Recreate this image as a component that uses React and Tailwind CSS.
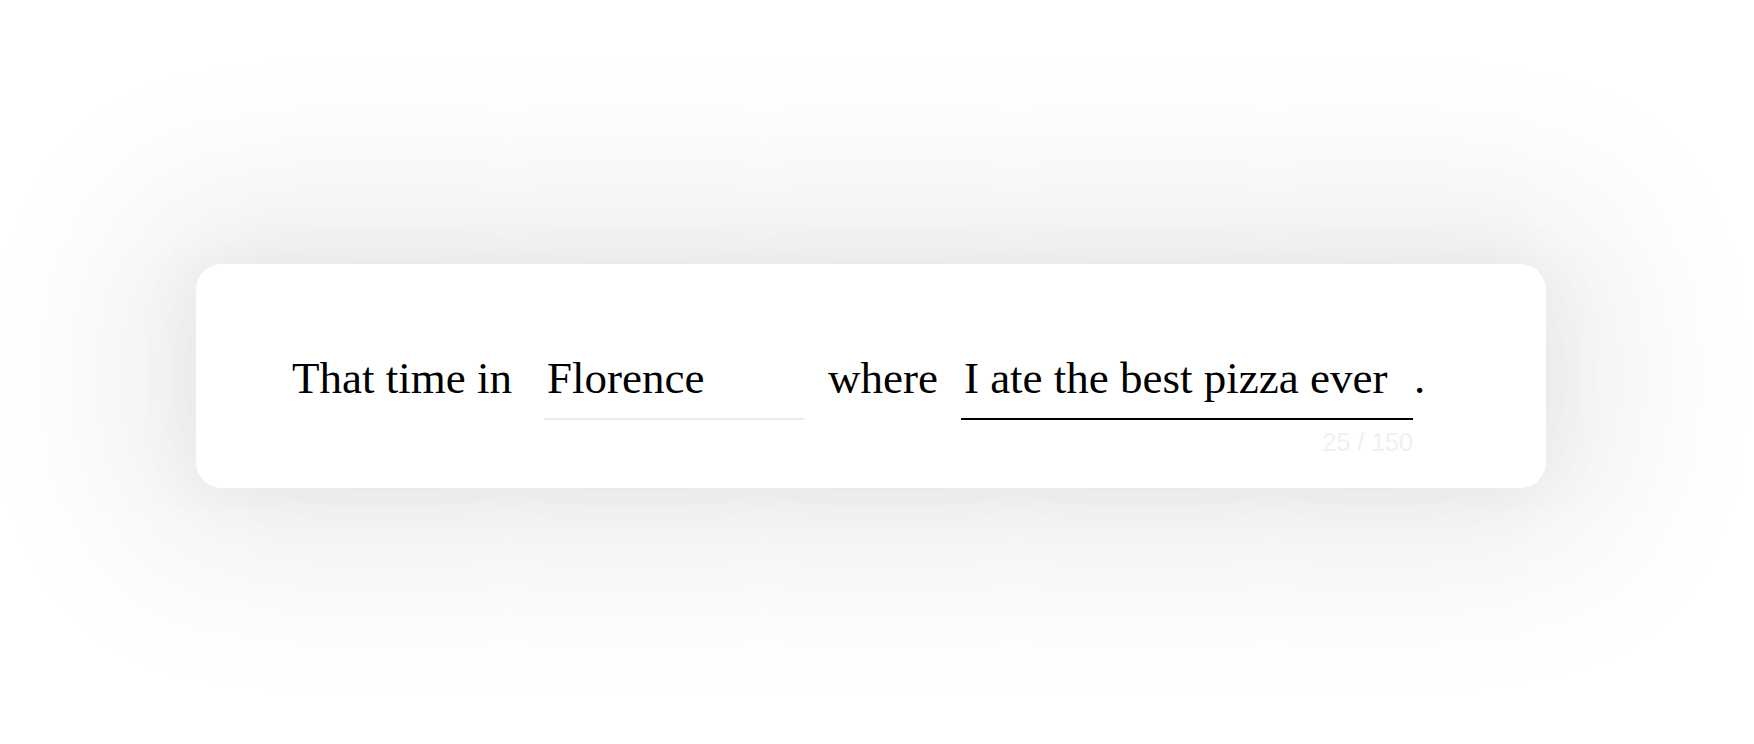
import { useState } from 'react'

const serif = { fontFamily: '"Liberation Serif", "Times New Roman", serif' }

const BlankInput = ({ value, onChange, width, active, maxLength }) => (
  <input
    type="text"
    value={value}
    onChange={onChange}
    maxLength={maxLength}
    style={serif}
    className={`${width} border-0 border-b-2 ${
      active ? 'border-black' : 'border-[#ebebeb]'
    } bg-transparent px-[3px] pb-[13px] text-[45px] leading-[1.15] text-black outline-none`}
  />
)

export default function App() {
  const [place, setPlace] = useState('Florence')
  const [memory, setMemory] = useState('I ate the best pizza ever')

  return (
    <div className="min-h-screen bg-white pl-[196px] pt-[264px]">
      <div className="h-[224px] w-[1350px] rounded-[26px] bg-white pl-[96px] pt-[89px] shadow-[0_0_70px_rgba(0,0,0,0.05),0_0_170px_70px_rgba(0,0,0,0.075)]">
        <div className="flex items-baseline text-[45px] leading-[1.15] text-black" style={serif}>
          <span>That time in</span>
          <div className="ml-[32px]">
            <BlankInput
              value={place}
              onChange={(e) => setPlace(e.target.value)}
              width="w-[260px]"
            />
          </div>
          <span className="ml-[24px]">where</span>
          <div className="ml-[23px] flex flex-col items-end">
            <BlankInput
              value={memory}
              onChange={(e) => setMemory(e.target.value)}
              width="w-[452px]"
              maxLength={150}
              active
            />
            <span
              className="mt-[10px] text-[25px] leading-none text-[#f0f0f0]"
              style={{ fontFamily: '"Liberation Sans", Arial, sans-serif' }}
            >
              {memory.length} / 150
            </span>
          </div>
          <span className="ml-[1px]">.</span>
        </div>
      </div>
    </div>
  )
}
